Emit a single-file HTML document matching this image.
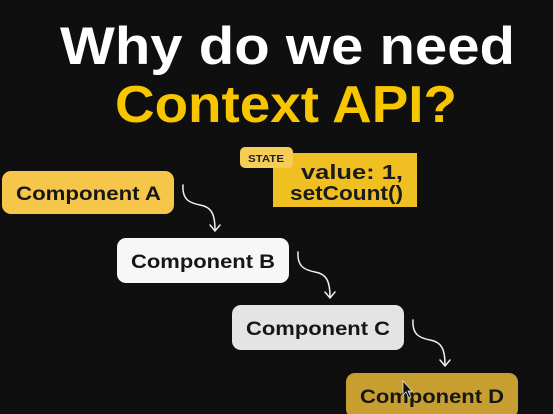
<!DOCTYPE html>
<html><head><style>
html,body{margin:0;padding:0;background:#0f0f0f;width:553px;height:414px;overflow:hidden}
</style></head><body>
<svg width="553" height="414" viewBox="0 0 553 414" xmlns="http://www.w3.org/2000/svg" style="display:block;font-family:'Liberation Sans',sans-serif;font-weight:bold">
<rect width="553" height="414" fill="#0f0f0f"/>
<text x="60" y="64" font-size="53" fill="#fff" textLength="455" lengthAdjust="spacingAndGlyphs">Why do we need</text>
<text x="115" y="122" font-size="52" fill="#f7c600" textLength="342" lengthAdjust="spacingAndGlyphs">Context API?</text>

<rect x="273" y="153" width="144" height="54" fill="#f0bf22"/>
<rect x="240" y="147" width="53" height="21" rx="5" fill="#f6cd55"/>
<text x="248" y="162" font-size="10" fill="#222" textLength="36" lengthAdjust="spacingAndGlyphs">STATE</text>
<text x="301" y="179" font-size="20" fill="#1a1a1a" textLength="102" lengthAdjust="spacingAndGlyphs">value: 1,</text>
<text x="290" y="200" font-size="20" fill="#1a1a1a" textLength="113" lengthAdjust="spacingAndGlyphs">setCount()</text>

<rect x="2" y="171" width="172" height="43" rx="9" fill="#f5c64a"/>
<text x="16" y="200" font-size="19" fill="#161616" textLength="145" lengthAdjust="spacingAndGlyphs">Component A</text>
<rect x="117" y="238" width="172" height="45" rx="9" fill="#f7f7f7"/>
<text x="131" y="268" font-size="19" fill="#161616" textLength="144" lengthAdjust="spacingAndGlyphs">Component B</text>
<rect x="232" y="305" width="172" height="45" rx="9" fill="#e4e4e4"/>
<text x="246" y="335" font-size="19" fill="#161616" textLength="144" lengthAdjust="spacingAndGlyphs">Component C</text>
<rect x="346" y="373" width="172" height="45" rx="9" fill="#c79f30"/>
<text x="360" y="403" font-size="19" fill="#161616" textLength="144" lengthAdjust="spacingAndGlyphs">Component D</text>

<g fill="none" stroke="#eee" stroke-width="1.5" stroke-linecap="round">
<path d="M183 185 C182 200,190 203,200 205 C212 207,215 215,215 230"/>
<path d="M210 225 L215 231 L220 225"/>
<path d="M298 252 C297 267,305 270,315 272 C327 274,330 282,330 297"/>
<path d="M325 292 L330 298 L335 292"/>
<path d="M413 320 C412 335,420 338,430 340 C442 342,445 350,445 365"/>
<path d="M440 360 L445 366 L450 360"/>
</g>
<path d="M403 381 L403 395 L406 392 L409 398 L411 397 L408 391 L412 391 Z" fill="#111" stroke="#eee" stroke-width="0.7"/>
</svg>
</body></html>
